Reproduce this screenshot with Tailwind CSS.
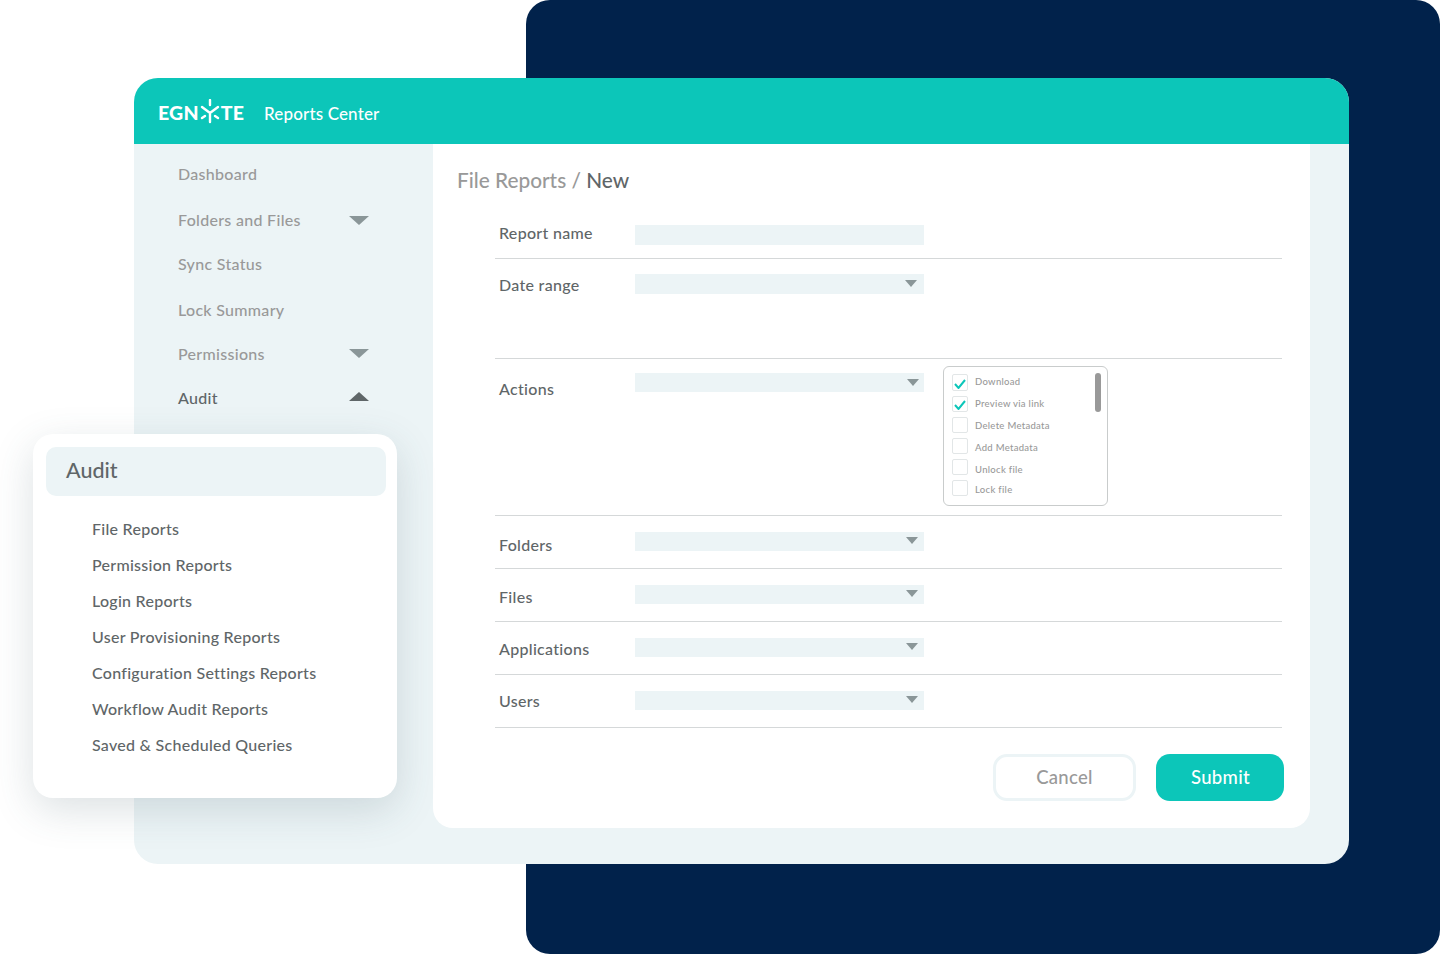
<!DOCTYPE html>
<html lang="en">
<head>
    <meta charset="UTF-8">
    <meta name="viewport" content="width=device-width, initial-scale=1.0">
    <title>Egnyte Reports Center</title>
    <script src="https://cdn.jsdelivr.net/npm/@tailwindcss/browser@4"></script>
</head>
<body class="bg-white font-['Lato',sans-serif] overflow-hidden">
    <div class="relative w-[1440px] h-[954px] overflow-hidden">
        <!-- navy block behind the window -->
        <div class="absolute left-[526px] top-0 w-[914px] h-[954px] bg-[#01224b] rounded-[24px]"></div>

        <!-- main window -->
        <div class="absolute left-[134px] top-[78px] w-[1215px] h-[786px] bg-[#ecf4f6] rounded-[24px] overflow-hidden flex flex-col">
            <header class="h-[66px] bg-[#0cc6b9] flex items-center pl-[24px] pt-[6px] text-white">
                <div class="flex items-center w-[106px] -mt-[3px] font-black text-[19.5px] tracking-[0.2px]">
                    <span>EGN</span>
                    <svg class="w-[22px] h-[25px] -mt-[3px]" viewBox="0 0 22 25" fill="none" stroke="currentColor" stroke-width="2.4" stroke-linecap="round">
                        <path d="M11 1v5M3 8l8 6 8-6M11 14v9M6 17l-3 2M16 17l3 2"/>
                    </svg>
                    <span>TE</span>
                </div>
                <span class="text-[17px] font-medium tracking-[0.15px] -mt-[1px]">Reports Center</span>
            </header>
            <div class="flex flex-1">
                <!-- sidebar -->
                <nav class="w-[299px] pl-[44px] pr-[64px] pt-[19px] text-[16px] font-medium tracking-[0.3px] text-[#999] flex flex-col">
                    <a class="h-[46px] leading-[22px]">Dashboard</a>
                    <a class="h-[44px] leading-[22px] flex justify-between">Folders and Files
                        <svg class="w-[20px] h-[9px] mt-[7px]" viewBox="0 0 20 9"><path d="M0 0h20L10 9z" fill="#8a9698"/></svg>
                    </a>
                    <a class="h-[46px] leading-[22px]">Sync Status</a>
                    <a class="h-[44px] leading-[22px]">Lock Summary</a>
                    <a class="h-[44px] leading-[22px] flex justify-between">Permissions
                        <svg class="w-[20px] h-[9px] mt-[6px]" viewBox="0 0 20 9"><path d="M0 0h20L10 9z" fill="#8a9698"/></svg>
                    </a>
                    <a class="h-[44px] leading-[22px] flex justify-between text-[#5f6668]">Audit
                        <svg class="w-[20px] h-[9px] mt-[5px]" viewBox="0 0 20 9"><path d="M0 9h20L10 0z" fill="#5f6668"/></svg>
                    </a>
                </nav>

                <!-- form panel -->
                <main class="w-[877px] h-[684px] bg-white rounded-b-[20px] pl-[62px] pr-[28px] relative">
                    <h1 class="h-[68px] -ml-[38px] pt-[22px] text-[20.8px] leading-[28px] font-medium text-[#999]">File Reports / <span class="text-[#5f6668]">New</span></h1>
                    <div class="text-[16px] font-medium tracking-[0.3px] text-[#5f6668]">
                        <div class="h-[47px] border-b border-[#d5d8d9] flex pt-[13px]">
                            <label class="w-[140px] pl-[4px] leading-[16px]">Report name</label>
                            <div class="w-[289px] h-[20px] bg-[#ecf4f6]"></div>
                        </div>
                        <div class="h-[100px] border-b border-[#d5d8d9] flex pt-[15px]">
                            <label class="w-[140px] pl-[4px] leading-[22px]">Date range</label>
                            <div class="w-[289px] h-[20px] bg-[#ecf4f6] flex justify-end pr-[7px] pt-[6px]">
                                <svg class="w-[12px] h-[7px]" viewBox="0 0 12 7"><path d="M0 0h12L6 7z" fill="#8a9698"/></svg>
                            </div>
                        </div>
                        <div class="h-[157px] border-b border-[#d5d8d9] flex pt-[14px]">
                            <label class="w-[140px] pl-[4px] leading-[31px]">Actions</label>
                            <div class="w-[289px] h-[19px] bg-[#ecf4f6] flex justify-end pr-[5px] pt-[6px]">
                                <svg class="w-[12px] h-[7px]" viewBox="0 0 12 7"><path d="M0 0h12L6 7z" fill="#8a9698"/></svg>
                            </div>
                            <div class="relative ml-[19px] -mt-[7px] w-[165px] h-[140px] border border-[#c9cccc] rounded-[6px] pl-[8px] pt-[7px] text-[9.5px] font-medium tracking-[0.3px] text-[#999] flex flex-col">
                                <div class="h-[22px] flex items-start gap-[7px]">
                                    <span class="w-[16px] h-[17px] border border-[#e2e6e7] rounded-[2px] flex items-center justify-center">
                                        <svg class="w-[12px] h-[10px] mt-[2px]" viewBox="0 0 12 10" fill="none" stroke="#0cc6b9" stroke-width="2"><path d="M1 5l3.5 4L11 1"/></svg>
                                    </span>
                                    <span class="leading-[16px]">Download</span>
                                </div>
                                <div class="h-[21px] flex items-start gap-[7px]">
                                    <span class="w-[16px] h-[16px] border border-[#e2e6e7] rounded-[2px] flex items-center justify-center">
                                        <svg class="w-[12px] h-[10px] mt-[2px]" viewBox="0 0 12 10" fill="none" stroke="#0cc6b9" stroke-width="2"><path d="M1 5l3.5 4L11 1"/></svg>
                                    </span>
                                    <span class="leading-[16px]">Preview via link</span>
                                </div>
                                <div class="h-[21px] flex items-start gap-[7px]">
                                    <span class="w-[16px] h-[16px] border border-[#e2e6e7] rounded-[2px]"></span>
                                    <span class="leading-[18px]">Delete Metadata</span>
                                </div>
                                <div class="h-[21px] flex items-start gap-[7px]">
                                    <span class="w-[16px] h-[16px] border border-[#e2e6e7] rounded-[2px]"></span>
                                    <span class="leading-[20px]">Add Metadata</span>
                                </div>
                                <div class="h-[21px] flex items-start gap-[7px]">
                                    <span class="w-[16px] h-[16px] border border-[#e2e6e7] rounded-[2px]"></span>
                                    <span class="leading-[22px]">Unlock file</span>
                                </div>
                                <div class="h-[21px] flex items-start gap-[7px]">
                                    <span class="w-[16px] h-[16px] border border-[#e2e6e7] rounded-[2px]"></span>
                                    <span class="leading-[19px]">Lock file</span>
                                </div>
                                <div class="absolute left-[151px] top-[6px] w-[6px] h-[39px] rounded-full bg-[#999]"></div>
                            </div>
                        </div>
                        <div class="h-[53px] border-b border-[#d5d8d9] flex pt-[16px]">
                            <label class="w-[140px] pl-[4px] leading-[25px]">Folders</label>
                            <div class="w-[289px] h-[19px] bg-[#ecf4f6] flex justify-end pr-[6px] pt-[5px]">
                                <svg class="w-[12px] h-[7px]" viewBox="0 0 12 7"><path d="M0 0h12L6 7z" fill="#8a9698"/></svg>
                            </div>
                        </div>
                        <div class="h-[53px] border-b border-[#d5d8d9] flex pt-[16px]">
                            <label class="w-[140px] pl-[4px] leading-[23px]">Files</label>
                            <div class="w-[289px] h-[19px] bg-[#ecf4f6] flex justify-end pr-[6px] pt-[5px]">
                                <svg class="w-[12px] h-[7px]" viewBox="0 0 12 7"><path d="M0 0h12L6 7z" fill="#8a9698"/></svg>
                            </div>
                        </div>
                        <div class="h-[53px] border-b border-[#d5d8d9] flex pt-[16px]">
                            <label class="w-[140px] pl-[4px] leading-[21px]">Applications</label>
                            <div class="w-[289px] h-[19px] bg-[#ecf4f6] flex justify-end pr-[6px] pt-[5px]">
                                <svg class="w-[12px] h-[7px]" viewBox="0 0 12 7"><path d="M0 0h12L6 7z" fill="#8a9698"/></svg>
                            </div>
                        </div>
                        <div class="h-[53px] border-b border-[#d5d8d9] flex pt-[16px]">
                            <label class="w-[140px] pl-[4px] leading-[19px]">Users</label>
                            <div class="w-[289px] h-[19px] bg-[#ecf4f6] flex justify-end pr-[6px] pt-[5px]">
                                <svg class="w-[12px] h-[7px]" viewBox="0 0 12 7"><path d="M0 0h12L6 7z" fill="#8a9698"/></svg>
                            </div>
                        </div>
                    </div>
                    <div class="flex justify-end gap-[20px] mt-[26px] -mr-[2px] text-[18.5px] font-medium tracking-[0.3px]">
                        <button class="w-[143px] h-[47px] border-[3px] border-[#ecf4f6] rounded-[14px] text-[#999]">Cancel</button>
                        <button class="w-[128px] h-[47px] pl-[1px] bg-[#0cc6b9] rounded-[14px] text-white">Submit</button>
                    </div>
                </main>
            </div>
        </div>

        <!-- audit popup -->
        <div class="absolute left-[33px] top-[434px] w-[364px] h-[364px] bg-white rounded-[20px] shadow-[0_12px_40px_rgba(60,90,100,0.18)] p-[13px]">
            <div class="h-[49px] w-[340px] bg-[#ecf4f6] rounded-[10px] pl-[20px] pb-[2px] flex items-center text-[21.5px] font-medium text-[#5f6668]">Audit</div>
            <ul class="pl-[46px] pt-[15px] text-[16px] font-medium tracking-[0.27px] text-[#5f6668]">
                <li class="h-[36px] leading-[36px]">File Reports</li>
                <li class="h-[36px] leading-[36px]">Permission Reports</li>
                <li class="h-[36px] leading-[36px]">Login Reports</li>
                <li class="h-[36px] leading-[36px]">User Provisioning Reports</li>
                <li class="h-[36px] leading-[36px]">Configuration Settings Reports</li>
                <li class="h-[36px] leading-[36px]">Workflow Audit Reports</li>
                <li class="h-[36px] leading-[36px]">Saved &amp; Scheduled Queries</li>
            </ul>
        </div>
    </div>
</body>
</html>
